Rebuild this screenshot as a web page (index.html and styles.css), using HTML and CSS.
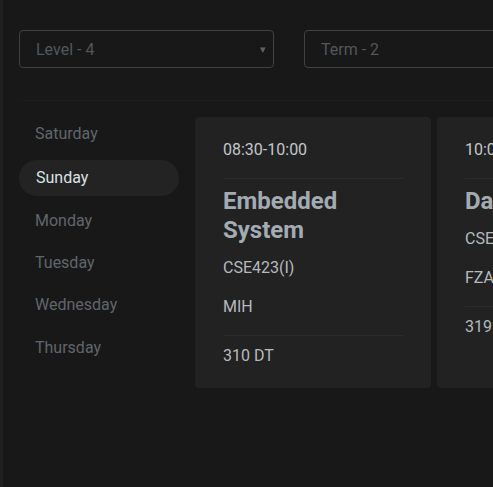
FILE: index.html
```html
<!DOCTYPE html>
<html lang="en">
<head>
<meta charset="utf-8">
<title>Routine</title>
<link rel="stylesheet" href="styles.css">
</head>
<body>
<div class="rail"></div>
<main class="main">
  <h1 class="page-title">Routine Listing</h1>
  <div class="filters">
    <div class="select">
      <span class="select-value">Level - 4</span>
      <span class="select-arrow">&#9662;</span>
    </div>
    <div class="select">
      <span class="select-value">Term - 2</span>
      <span class="select-arrow">&#9662;</span>
    </div>
  </div>
  <div class="divider"></div>
  <div class="content">
    <nav class="days">
      <div class="day">Saturday</div>
      <div class="day active">Sunday</div>
      <div class="day monday">Monday</div>
      <div class="day">Tuesday</div>
      <div class="day">Wednesday</div>
      <div class="day thursday">Thursday</div>
    </nav>
    <div class="cards">
      <article class="card">
        <div class="time">08:30-10:00</div>
        <hr class="rule rule-top">
        <h2 class="course">Embedded System</h2>
        <div class="meta code">CSE423(I)</div>
        <div class="meta teacher">MIH</div>
        <hr class="rule rule-bottom">
        <div class="meta room">310 DT</div>
      </article>
      <article class="card">
        <div class="time">10:00-11:30</div>
        <hr class="rule rule-top">
        <h2 class="course">Data Mining</h2>
        <div class="meta code">CSE417(I)</div>
        <div class="meta teacher">FZA</div>
        <hr class="rule rule-bottom">
        <div class="meta room">319 DT</div>
      </article>
    </div>
  </div>
</main>
</body>
</html>
```
FILE: styles.css
```css
* { box-sizing: border-box; }
html, body { height: 100%; }
body {
  margin: 0;
  background: #181818;
  font-family: Roboto, "Noto Sans", Arial, sans-serif;
  display: flex;
  overflow: hidden;
}
.rail {
  width: 3px;
  flex: none;
  background: #202020;
}
.main {
  flex: 1;
  min-width: 0;
  padding-left: 16px;
  overflow: hidden;
}
.page-title {
  margin: -31px 0 0 0;
  height: 31px;
  font-size: 27px;
  line-height: 28px;
  font-weight: 500;
  color: #e6e9ec;
  white-space: nowrap;
}
.filters {
  display: flex;
  gap: 30px;
  margin-top: 30px;
}
.select {
  flex: none;
  width: 255px;
  height: 38px;
  border: 1px solid #3f4143;
  border-radius: 4px;
  display: flex;
  align-items: center;
  justify-content: space-between;
  padding: 0 7px 0 16px;
}
.select-value {
  font-size: 16px;
  color: #50575d;
}
.select-arrow {
  font-size: 11px;
  color: #5c636a;
}
.filters .select:last-child .select-arrow { visibility: hidden; }
.divider {
  margin-top: 32px;
  height: 1px;
  background: #1c1c1c;
}
.content {
  display: flex;
  gap: 16px;
  margin-top: 16px;
}
.days {
  width: 160px;
  flex: none;
  display: flex;
  flex-direction: column;
  gap: 6px;
}
.day {
  height: 36px;
  line-height: 36px;
  padding-left: 16px;
  font-size: 16px;
  color: #60666c;
  border-radius: 18px;
}
.day:first-child { margin-top: -1px; }
.day.active {
  margin-top: 2px;
  background: #232323;
  color: #dde1e5;
  padding-left: 17px;
}
.day.monday { margin-top: 1px; }
.day.thursday { margin-top: 1px; }
.cards {
  display: flex;
  gap: 6px;
}
.card {
  flex: none;
  width: 236px;
  height: 271px;
  background: #222222;
  border-radius: 4px;
  padding: 23px 28px 0 28px;
}
.time {
  font-size: 16px;
  line-height: 20px;
  color: #c2c7cc;
}
.rule {
  border: 0;
  height: 1px;
  background: #2c2c2c;
  margin: 0;
}
.rule-top { margin-top: 18px; }
.course {
  margin: 8px 0 0 0;
  font-size: 24px;
  line-height: 29px;
  font-weight: 700;
  color: #a3abb3;
}
.meta {
  font-size: 16px;
  line-height: 20px;
  color: #b5babf;
}
.code { margin-top: 13px; }
.teacher { margin-top: 19px; }
.rule-bottom { margin-top: 18px; }
.room { margin-top: 10px; }
```
